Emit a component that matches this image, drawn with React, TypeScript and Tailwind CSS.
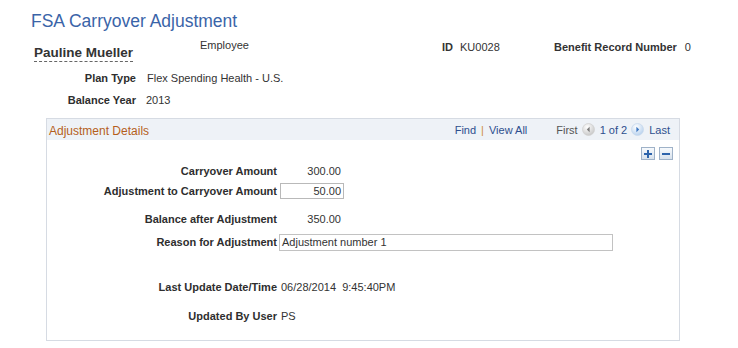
const fontCls = "font-['Liberation_Sans',Arial,sans-serif]"

function NavArrow({ dir, enabled }: { dir: 'left' | 'right'; enabled: boolean }) {
  const id = `g-${dir}`
  return (
    <svg width="13" height="13" viewBox="0 0 13 13" className="mt-[-3px]">
      <defs>
        <radialGradient id={id} cx="40%" cy="30%" r="70%">
          <stop offset="0%" stopColor="#ffffff" />
          <stop offset="100%" stopColor={enabled ? '#b9d2ee' : '#c8c8c8'} />
        </radialGradient>
      </defs>
      <circle cx="6.5" cy="6.5" r="6" fill={`url(#${id})`} stroke={enabled ? '#c9d9ec' : '#d2d2d2'} strokeWidth="0.8" />
      {dir === 'left' ? (
        <path d="M7.6 3.8 L4.8 6.5 L7.6 9.2 Z" fill="#7c7c7c" />
      ) : (
        <path d="M5.4 3.8 L8.2 6.5 L5.4 9.2 Z" fill="#3f78c2" />
      )}
    </svg>
  )
}

function SquareBtn({ kind }: { kind: 'plus' | 'minus' }) {
  return (
    <div className="w-[14px] h-[13px] border border-[#9fb2c8] bg-gradient-to-b from-[#f7fafd] to-[#d7e1ec] flex items-center justify-center">
      <svg width="10" height="10" viewBox="0 0 10 10">
        <rect x="1" y="4" width="8" height="2" fill="#2c63ab" />
        {kind === 'plus' && <rect x="4" y="1" width="2" height="8" fill="#2c63ab" />}
      </svg>
    </div>
  )
}

function FormRow({ label, children, className }: { label: string; children: React.ReactNode; className: string }) {
  return (
    <div className={`flex items-center ${className}`}>
      <div className="w-[230px] text-right font-bold text-[11px] text-[#2e2e2e]">{label}</div>
      <div className="ml-[3px] flex items-center text-[11px] text-[#333]">{children}</div>
    </div>
  )
}

export default function App() {
  return (
    <div className={`w-[738px] h-[348px] bg-white overflow-hidden ${fontCls} text-[#333]`}>
      <h1 className="pl-[31px] pt-[10px] text-[17.5px] leading-[22px] text-[#3a64a8]">FSA Carryover Adjustment</h1>

      <div className="flex items-start mt-[8px] h-[17px]">
        <div className="pl-[34px] w-[200px]">
          <span className="font-bold text-[13.5px] leading-[16px] text-[#333] border-b border-dashed border-[#666] inline-block">
            Pauline Mueller
          </span>
        </div>
        <div className="w-[242px] text-[11px] leading-[13px] mt-[-1px]">Employee</div>
        <div className="flex w-[112px] text-[11px] leading-[13px] mt-[1px]">
          <span className="font-bold">ID</span>
          <span className="ml-[7px]">KU0028</span>
        </div>
        <div className="flex text-[11px] leading-[13px] mt-[1px]">
          <span className="font-bold">Benefit Record Number</span>
          <span className="ml-[8px]">0</span>
        </div>
      </div>

      <div className="mt-[10px]">
        <div className="flex items-center h-[22px]">
          <div className="w-[136px] text-right font-bold text-[11px] text-[#2e2e2e]">Plan Type</div>
          <div className="ml-[11px] text-[11px]">Flex Spending Health - U.S.</div>
        </div>
        <div className="flex items-center h-[22px]">
          <div className="w-[136px] text-right font-bold text-[11px] text-[#2e2e2e]">Balance Year</div>
          <div className="ml-[10px] text-[11px]">2013</div>
        </div>
      </div>

      <div className="ml-[46px] mt-[7px] w-[634px] h-[223px] border border-[#d6dbe3]">
        <div className="h-[21px] bg-[#eef2f7] flex items-center justify-between pt-[2px] pl-[2px] pr-[9px]">
          <span className="text-[12px] text-[#b55f1c]">Adjustment Details</span>
          <div className="flex items-center text-[11px]">
            <span className="text-[#2d4f8e]">Find</span>
            <span className="mx-[5px] text-[#d08a3e]">|</span>
            <span className="text-[#2d4f8e]">View All</span>
            <span className="ml-[29px] text-[#555]">First</span>
            <span className="ml-[4px]"><NavArrow dir="left" enabled={false} /></span>
            <span className="ml-[5px] text-[#2d4f8e]">1 of 2</span>
            <span className="ml-[4px]"><NavArrow dir="right" enabled /></span>
            <span className="ml-[5px] text-[#2d4f8e]">Last</span>
          </div>
        </div>

        <div className="flex justify-end gap-[4px] pr-[6px] mt-[7px]">
          <SquareBtn kind="plus" />
          <SquareBtn kind="minus" />
        </div>

        <FormRow label="Carryover Amount" className="h-[16px] mt-[3px]">
          <span className="w-[64px] text-right pr-[3px]">300.00</span>
        </FormRow>
        <FormRow label="Adjustment to Carryover Amount" className="h-[16px] mt-[4px]">
          <div className="w-[64px] h-[16px] border border-[#b9b9b9] bg-white text-right pr-[2px] leading-[14px]">50.00</div>
        </FormRow>
        <FormRow label="Balance after Adjustment" className="h-[16px] mt-[12px]">
          <span className="w-[64px] text-right pr-[3px]">350.00</span>
        </FormRow>
        <FormRow label="Reason for Adjustment" className="h-[17px] mt-[7px]">
          <div className="-ml-[1px] w-[334px] h-[17px] border border-[#c2c2c2] bg-white pl-[2px] leading-[15px]">Adjustment number 1</div>
        </FormRow>
        <FormRow label="Last Update Date/Time" className="h-[16px] mt-[28px]">
          <span className="ml-[1px]">06/28/2014&nbsp;&nbsp;9:45:40PM</span>
        </FormRow>
        <FormRow label="Updated By User" className="h-[16px] mt-[13px]">
          <span className="ml-[1px]">PS</span>
        </FormRow>
      </div>
    </div>
  )
}
